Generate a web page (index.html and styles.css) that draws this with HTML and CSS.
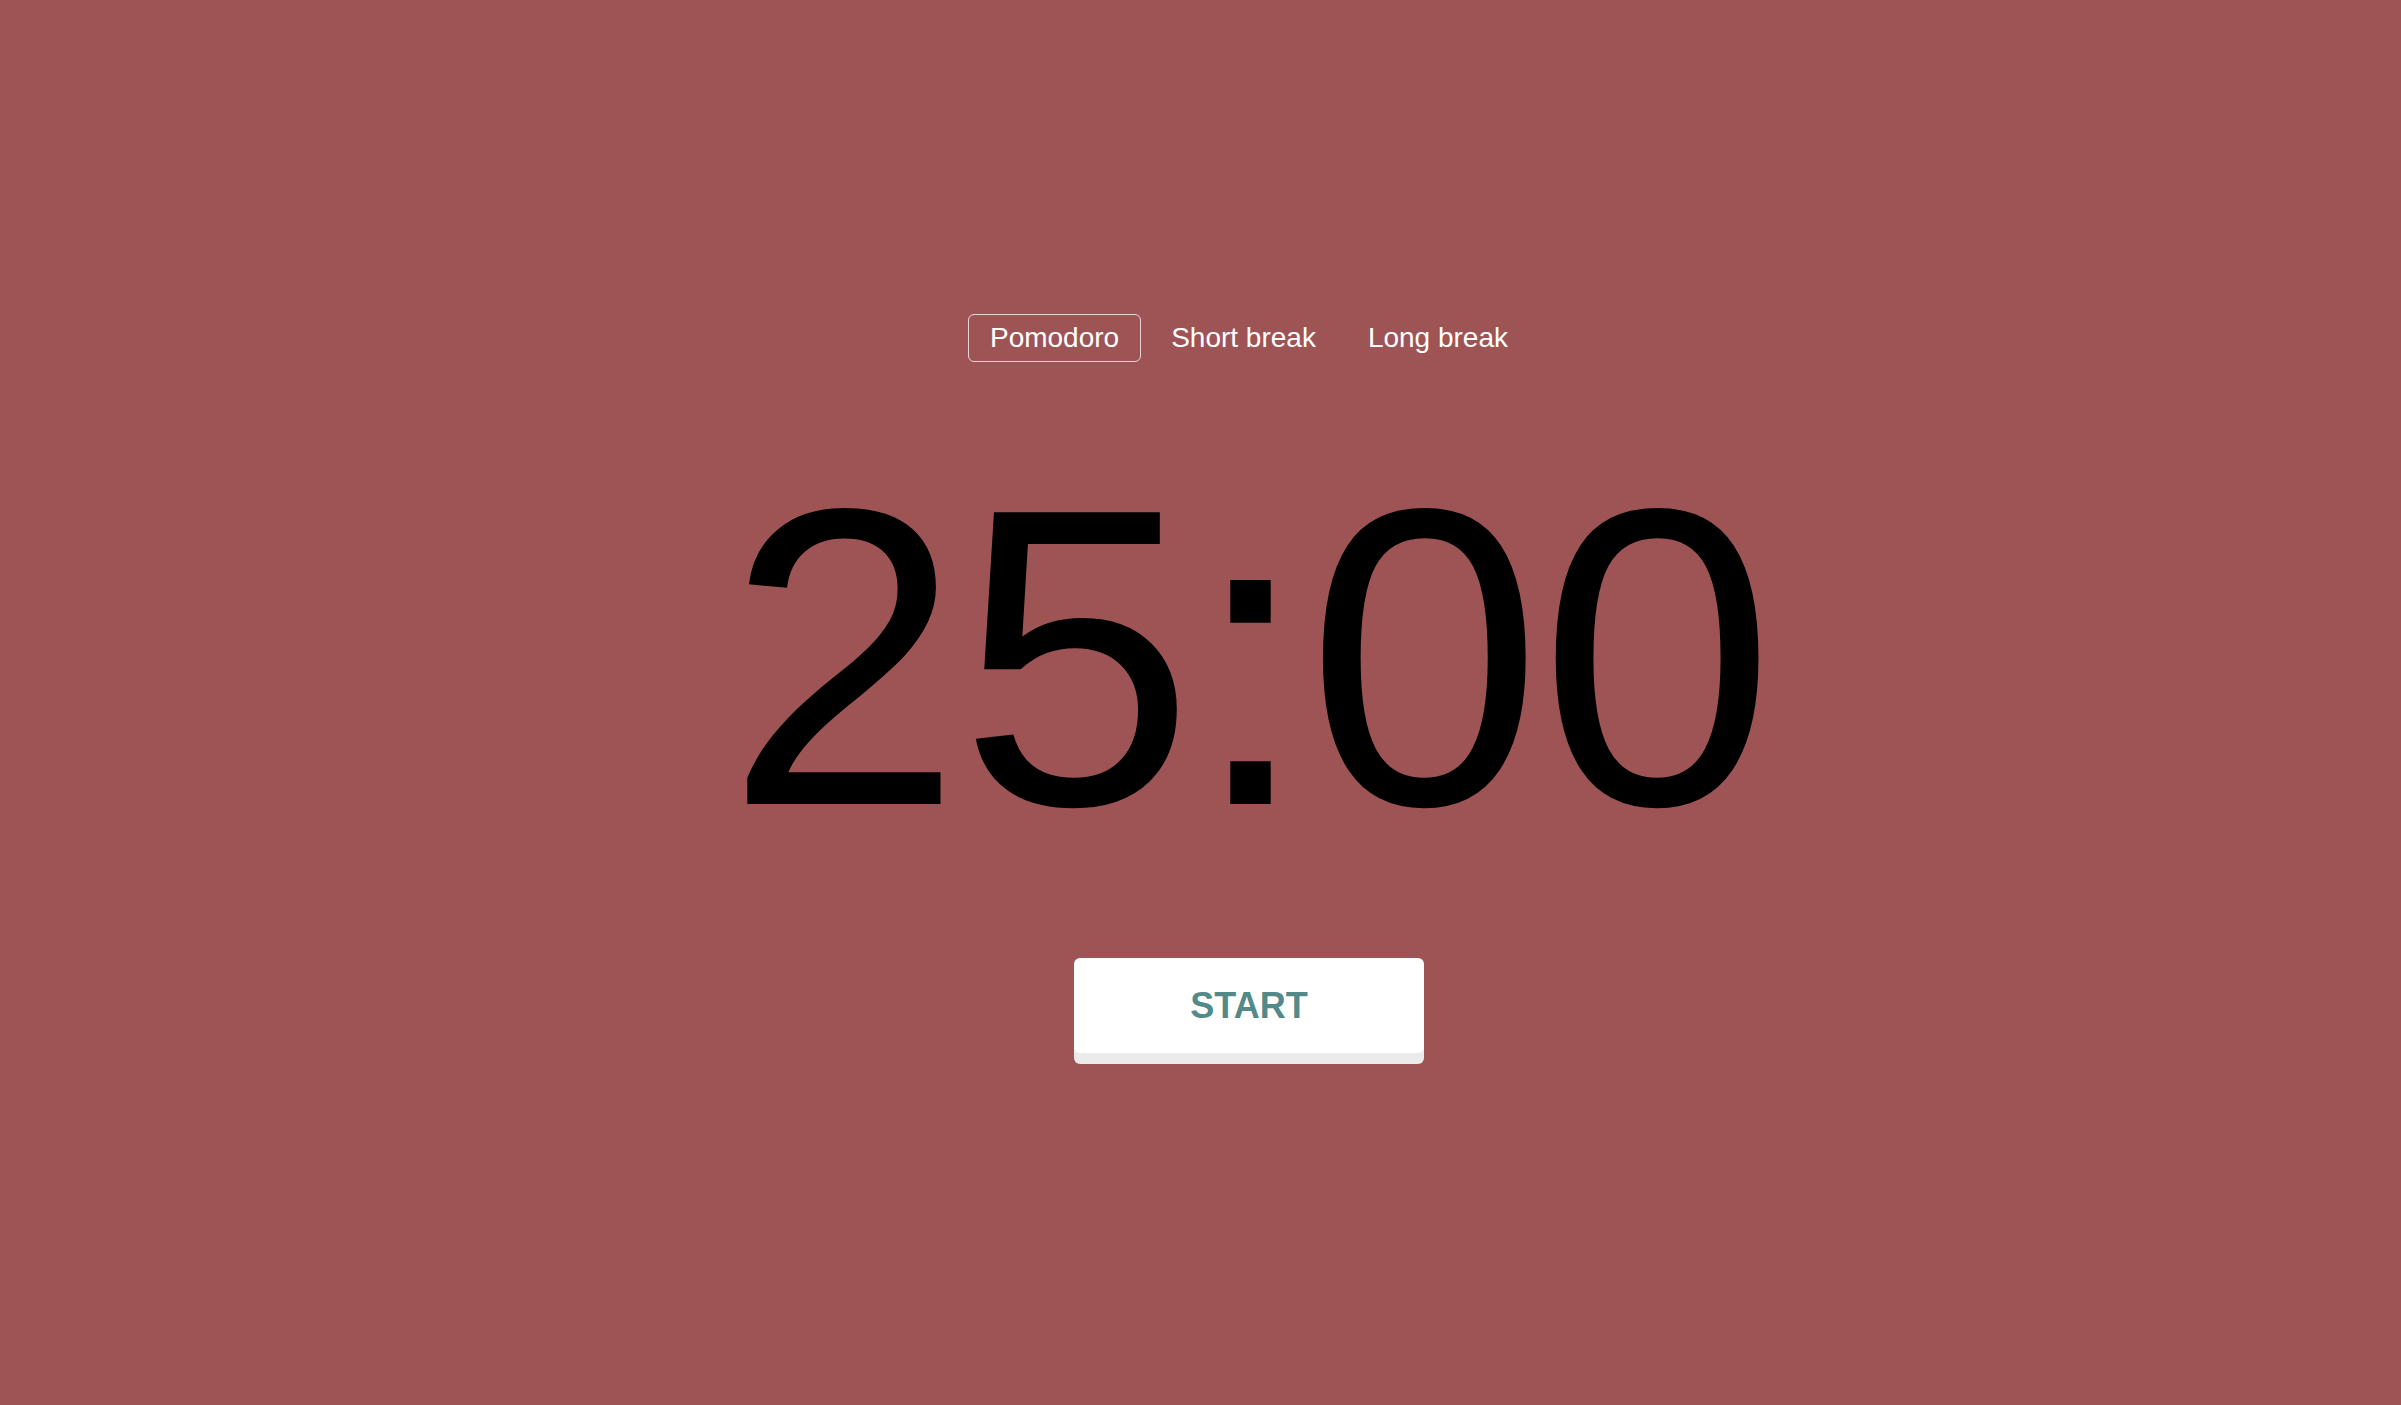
FILE: index.html
```html
<!DOCTYPE html>
<html lang="en">
<head>
<meta charset="utf-8">
<title>Pomodoro</title>
<link rel="stylesheet" href="styles.css">
</head>
<body>
<main class="app">
  <nav class="tabs">
    <button class="tab tab-active">Pomodoro</button>
    <button class="tab">Short break</button>
    <button class="tab">Long break</button>
  </nav>
  <div class="timer">25:00</div>
  <button class="start">START</button>
</main>
</body>
</html>
```
FILE: styles.css
```css
html, body {
  margin: 0;
  padding: 0;
  height: 100%;
}
body {
  background: rgb(158, 84, 85);
  font-family: "Liberation Sans", Arial, sans-serif;
}
.app {
  display: flex;
  flex-direction: column;
  align-items: center;
  padding-top: 314px;
  padding-left: 97px;
}
.tabs {
  display: flex;
  gap: 8px;
}
.tab {
  font-family: "Liberation Sans", Arial, sans-serif;
  font-size: 28px;
  line-height: 32px;
  padding: 7px 21px;
  border: 1px solid transparent;
  border-radius: 6px;
  background: transparent;
  color: #fff;
  cursor: pointer;
}
.tab-active {
  border-color: rgba(255, 255, 255, 0.75);
}
.timer {
  margin-top: 83px;
  font-size: 424px;
  line-height: 1;
  letter-spacing: -3px;
  color: #000;
}
.start {
  margin-top: 89px;
  width: 350px;
  height: 95px;
  border: none;
  border-radius: 6px;
  background: #fff;
  box-shadow: 0 11px 0 #ebebeb;
  color: rgb(81, 138, 136);
  font-family: "Liberation Sans", Arial, sans-serif;
  font-weight: bold;
  font-size: 36px;
  cursor: pointer;
}
```
